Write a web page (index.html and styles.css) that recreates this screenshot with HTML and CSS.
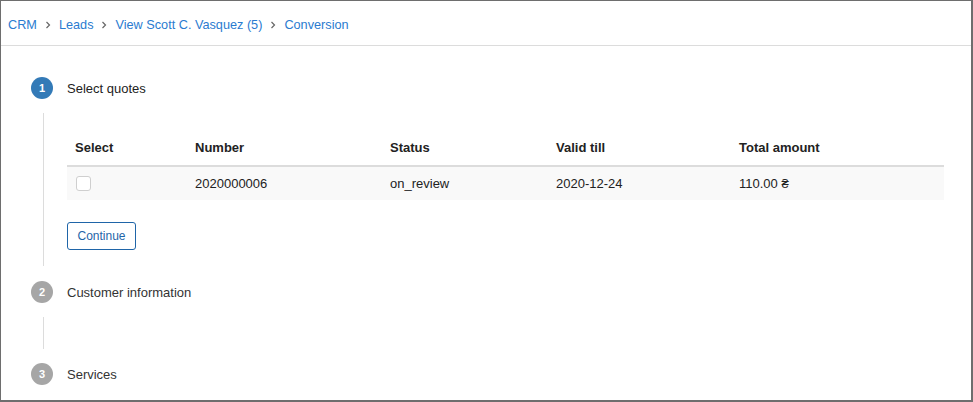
FILE: index.html
```html
<!DOCTYPE html>
<html>
<head>
<meta charset="utf-8">
<link rel="stylesheet" href="styles.css">
</head>
<body>
<div class="frame">
  <nav class="crumbs">
    <a class="crumb">CRM</a>
    <svg class="chev" viewBox="0 0 6 8"><path d="M1.5 1 L4.5 4 L1.5 7" fill="none" stroke="#666" stroke-width="1.2"/></svg>
    <a class="crumb">Leads</a>
    <svg class="chev" viewBox="0 0 6 8"><path d="M1.5 1 L4.5 4 L1.5 7" fill="none" stroke="#666" stroke-width="1.2"/></svg>
    <a class="crumb">View Scott C. Vasquez (5)</a>
    <svg class="chev" viewBox="0 0 6 8"><path d="M1.5 1 L4.5 4 L1.5 7" fill="none" stroke="#666" stroke-width="1.2"/></svg>
    <a class="crumb">Conversion</a>
  </nav>
  <div class="steps">
    <div class="step">
      <div class="step-head"><span class="num active">1</span><span class="title">Select quotes</span></div>
      <div class="step-body first">
        <table class="quotes">
          <colgroup><col class="c1"><col class="c2"><col class="c3"><col class="c4"><col class="c5"></colgroup>
          <thead>
            <tr><th>Select</th><th>Number</th><th>Status</th><th>Valid till</th><th>Total amount</th></tr>
          </thead>
          <tbody>
            <tr><td><span class="check"></span></td><td>2020000006</td><td>on_review</td><td>2020-12-24</td><td>110.00 ₴</td></tr>
          </tbody>
        </table>
        <button class="btn">Continue</button>
      </div>
    </div>
    <div class="step">
      <div class="step-head"><span class="num">2</span><span class="title muted">Customer information</span></div>
      <div class="step-body empty"></div>
    </div>
    <div class="step">
      <div class="step-head"><span class="num">3</span><span class="title muted">Services</span></div>
    </div>
  </div>
</div>
</body>
</html>
```
FILE: styles.css
```css
* { box-sizing: border-box; }
html, body { margin: 0; padding: 0; background: #fff; }
body { font-family: "Liberation Sans", Arial, sans-serif; font-size: 13px; color: #222; }
.frame {
  width: 973px; height: 402px;
  border-style: solid; border-color: #6e6e6e;
  border-width: 1px 2px 2px 1px;
  overflow: hidden;
}
.crumbs {
  height: 45px;
  border-bottom: 1px solid #dcdcdc;
  display: flex; align-items: center;
  padding: 3px 0 0 7px;
  gap: 8px;
}
.crumb { color: #2a7bd0; font-size: 12.7px; text-decoration: none; }
.chev { width: 6px; height: 8px; margin: 0; }
.steps { padding: 31px 0 0 30px; }
.step-head { display: flex; align-items: center; height: 22px; gap: 14px; }
.num {
  width: 22px; height: 22px; border-radius: 50%;
  background: #a6a6a6; color: #fff;
  font-size: 11px; font-weight: bold;
  display: flex; align-items: center; justify-content: center;
}
.num.active { background: #337ab7; }
.title { font-size: 13px; color: #222; }
.title.muted { color: #333; }
.step-body {
  margin: 14px 0 15px 12px;
  border-left: 1px solid #dcdcdc;
  padding-left: 23px;
}
.step-body.first { padding-top: 17px; padding-bottom: 16px; }
.step-body.empty { height: 32px; margin-bottom: 14px; }
.quotes { width: 877px; border-collapse: collapse; table-layout: fixed; }
.c1 { width: 120px; } .c2 { width: 195px; } .c3 { width: 166px; } .c4 { width: 183px; } .c5 { width: 213px; }
.quotes th {
  text-align: left; font-weight: bold; color: #222;
  height: 36px; padding: 0 8px 1px;
  border-bottom: 2px solid #dcdcdc;
}
.quotes td { height: 34px; padding: 0 8px; background: #f9f9f9; color: #222; vertical-align: middle; }
.check {
  display: block; width: 15px; height: 15px; margin-left: 1px;
  border: 1px solid #cfcfcf; border-radius: 3px; background: #fff;
}
.btn {
  margin-top: 22px;
  height: 28px; width: 69px;
  border: 1px solid #1f65a8; border-radius: 3px;
  background: #fff; color: #1f65a8;
  font-family: "Liberation Sans", Arial, sans-serif; font-size: 12px;
  padding: 0; display: block;
}
```
